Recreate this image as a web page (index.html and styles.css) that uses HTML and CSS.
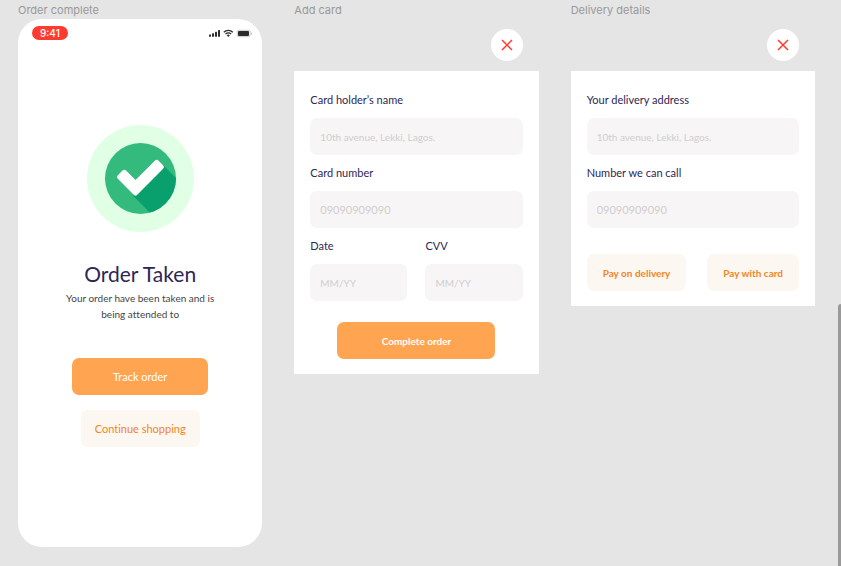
FILE: index.html
```html
<!DOCTYPE html>
<html lang="en">
<head>
  <meta charset="utf-8">
  <meta name="viewport" content="width=device-width, initial-scale=1">
  <title>Checkout screens</title>
  <link rel="stylesheet" href="styles.css">
</head>
<body>
  <main class="board">
    <section class="frame">
      <h2 class="frame-name">Order complete</h2>
      <div class="phone">
        <div class="status-bar">
          <span class="time">9:41</span>
          <svg class="status-icons" width="44" height="10" viewBox="0 0 44 10" aria-hidden="true">
            <g fill="#2b2b2e">
              <rect x="0" y="6.500" width="2" height="2.300" rx=".5"/>
              <rect x="3" y="5.300" width="2" height="3.500" rx=".5"/>
              <rect x="6" y="3.800" width="2" height="5" rx=".5"/>
              <rect x="9" y="2" width="2" height="6.800" rx=".5"/>
              <rect x="29" y="3" width="11" height="5" rx="1"/>
              <path d="M17.800 7.300a2.200 2.200 0 0 1 3 0L19.300 8.900z"/>
            </g>
            <path d="M14.800 4.300a6.400 6.400 0 0 1 9 0M16.500 6.100a4 4 0 0 1 5.600 0" fill="none" stroke="#2b2b2e" stroke-width="1.300"/>
            <rect x="28.300" y="2.300" width="12.800" height="6.400" rx="1.600" fill="none" stroke="#2b2b2e" stroke-opacity=".35" stroke-width=".7"/>
            <path d="M42 4.400v2.200q1-.3 1-1.100t-1-1.100z" fill="#2b2b2e" fill-opacity=".4"/>
          </svg>
        </div>
        <svg class="success" width="107" height="107" viewBox="0 0 107 107" role="img" aria-label="Success">
          <defs><clipPath id="disc"><circle cx="53.500" cy="53.500" r="35.500"/></clipPath></defs>
          <circle cx="53.500" cy="53.500" r="53.500" fill="#e0ffe4"/>
          <circle cx="53.500" cy="53.500" r="35.500" fill="#33ba7c"/>
          <path d="M75 39L92 56V95H70L46 70.500z" fill="#0aa06e" clip-path="url(#disc)"/>
          <path d="M48.500 58.500L37.300 47.300L32.600 52.100L48.500 68L74.400 42L69.800 37.400z" fill="#fff" stroke="#fff" stroke-width="5" stroke-linejoin="round"/>
        </svg>
        <h1 class="title">Order Taken</h1>
        <p class="message">Your order have been taken and is being attended to</p>
        <button class="button primary track" type="button">Track order</button>
        <button class="button soft continue" type="button">Continue shopping</button>
      </div>
    </section>

    <section class="frame">
      <h2 class="frame-name">Add card</h2>
      <button class="close" type="button" aria-label="Close">
        <svg width="12" height="12" viewBox="0 0 12 12" aria-hidden="true"><path d="M1 1l10 10M11 1L1 11"/></svg>
      </button>
      <form class="card">
        <div class="field">
          <label for="holder">Card holder’s name</label>
          <input id="holder" type="text" placeholder="10th avenue, Lekki, Lagos.">
        </div>
        <div class="field">
          <label for="number">Card number</label>
          <input id="number" class="digits" type="text" placeholder="09090909090">
        </div>
        <div class="pair">
          <div class="field">
            <label for="date">Date</label>
            <input id="date" type="text" placeholder="MM/YY">
          </div>
          <div class="field">
            <label for="cvv">CVV</label>
            <input id="cvv" type="text" placeholder="MM/YY">
          </div>
        </div>
        <button class="button primary strong complete" type="button">Complete order</button>
      </form>
    </section>

    <section class="frame">
      <h2 class="frame-name">Delivery details</h2>
      <button class="close" type="button" aria-label="Close">
        <svg width="12" height="12" viewBox="0 0 12 12" aria-hidden="true"><path d="M1 1l10 10M11 1L1 11"/></svg>
      </button>
      <form class="card">
        <div class="field">
          <label for="address">Your delivery address</label>
          <input id="address" type="text" placeholder="10th avenue, Lekki, Lagos.">
        </div>
        <div class="field">
          <label for="phone">Number we can call</label>
          <input id="phone" class="digits" type="tel" placeholder="09090909090">
        </div>
        <div class="actions">
          <button class="button soft strong" type="button">Pay on delivery</button>
          <button class="button soft strong" type="button">Pay with card</button>
        </div>
      </form>
    </section>
  </main>
  <div class="scroll-thumb"></div>
</body>
</html>
```
FILE: styles.css
```css
* {
  box-sizing: border-box;
}

body {
  margin: 0;
  background: #e5e5e5;
  color: #2d2656;
  font-family: Lato, "Liberation Sans", sans-serif;
  font-size: 11px;
  line-height: 16px;
  font-variant-ligatures: none;
}

.board {
  display: grid;
  grid-template-columns: repeat(3, minmax(0, 1fr));
  align-items: start;
  gap: 32px;
  padding: 0 26px 20px 18px;
}

.frame {
  display: flex;
  flex-direction: column;
}

.frame-name {
  margin: 0;
  padding-top: 1px;
  color: #999;
  font: 400 11px/18px Inter, "Liberation Sans", sans-serif;
}

.phone {
  display: flex;
  flex-direction: column;
  align-items: center;
  padding: 7px 0 100px;
  border-radius: 24px;
  background: #fff;
}

.status-bar {
  display: flex;
  align-self: stretch;
  align-items: center;
  justify-content: space-between;
  padding: 0 9px 0 14px;
}

.time {
  padding: 0 8px;
  border-radius: 7px;
  background: #ff3b30;
  color: #fff;
  font: 500 10px/14px Inter, "Liberation Sans", sans-serif;
}

.success {
  margin-top: 85px;
}

.title {
  margin: 28px 0 0;
  font-size: 21px;
  font-weight: 400;
  line-height: 28px;
}

.message {
  max-width: 164px;
  margin: 2px 0 0;
  color: #444;
  font-size: 10px;
  text-align: center;
}

.button {
  height: 37px;
  padding: 0 16px;
  border: 0;
  border-radius: 7px;
  font: inherit;
  white-space: nowrap;
}

.primary {
  background: #ffa451;
  color: #fff;
}

.soft {
  background: #fcf7f0;
  color: #f08626;
}

.strong {
  font-size: 10px;
  font-weight: 700;
}

.track {
  width: 136px;
  margin-top: 36px;
}

.continue {
  margin-top: 15px;
  padding: 0 14px;
}

.close {
  display: grid;
  place-items: center;
  align-self: flex-end;
  width: 32px;
  height: 32px;
  margin: 10px 16px 10px 0;
  padding: 0;
  border: 0;
  border-radius: 50%;
  background: #fff;
}

.close path {
  fill: none;
  stroke: #ff3b30;
  stroke-width: 1.5;
}

.card {
  display: flex;
  flex-direction: column;
  gap: 10px;
  padding: 21px 16px 15px;
  background: #fff;
}

.field {
  display: flex;
  flex-direction: column;
  gap: 10px;
  min-width: 0;
}

.field input {
  width: 100%;
  height: 37px;
  padding: 0 10px;
  border: 0;
  border-radius: 7px;
  background: #f7f5f5;
  color: #2d2656;
  font: inherit;
  font-size: 10px;
}

.field .digits {
  font-size: 11px;
}

.field input::placeholder {
  color: #d0cece;
  opacity: 1;
}

.pair {
  display: grid;
  grid-template-columns: 1fr 1fr;
  gap: 18px;
}

.complete {
  align-self: center;
  width: 158px;
  margin-top: 11px;
}

.actions {
  display: flex;
  justify-content: space-between;
  margin-top: 16px;
}

.scroll-thumb {
  position: fixed;
  top: 304px;
  right: 0;
  bottom: 0;
  width: 3px;
  border-radius: 3px 0 0 0;
  background: #999;
}
```
